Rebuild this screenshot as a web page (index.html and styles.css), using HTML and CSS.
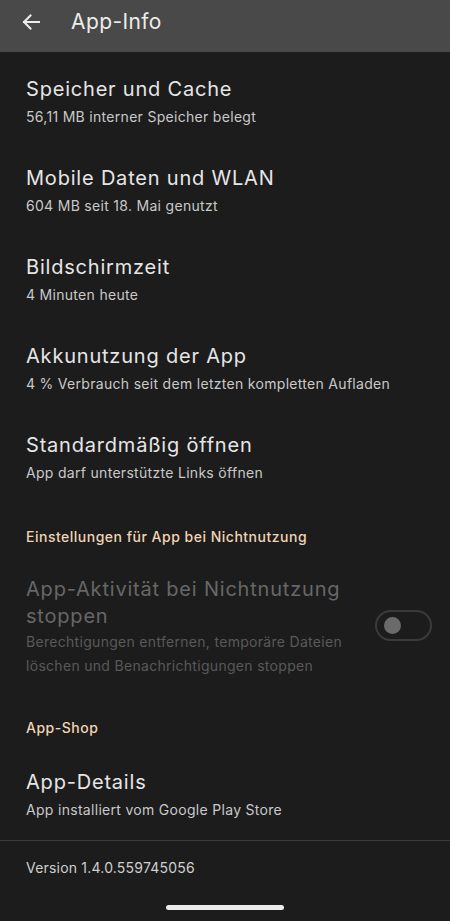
FILE: index.html
```html
<!doctype html>
<html>
  <head>
    <meta charset="utf-8">
    <title>App-Info</title>
    <link rel="stylesheet" href="styles.css">
  </head>
  <body>
    <header class="app-bar">
      <button class="back-button" aria-label="Zurück">
        <svg width="18" height="16" viewBox="0 0 18 16" fill="none" stroke="currentColor" stroke-width="2" stroke-linecap="square">
          <path d="M2 8h15M8.5 1.5 2 8l6.5 6.5"/>
        </svg>
      </button>
      <h1 class="app-bar-title">App-Info</h1>
    </header>

    <main class="settings">
      <div class="pref">
        <div class="pref-title">Speicher und Cache</div>
        <div class="pref-summary">56,11 MB interner Speicher belegt</div>
      </div>
      <div class="pref">
        <div class="pref-title">Mobile Daten und WLAN</div>
        <div class="pref-summary">604 MB seit 18. Mai genutzt</div>
      </div>
      <div class="pref">
        <div class="pref-title">Bildschirmzeit</div>
        <div class="pref-summary">4 Minuten heute</div>
      </div>
      <div class="pref">
        <div class="pref-title">Akkunutzung der App</div>
        <div class="pref-summary">4 % Verbrauch seit dem letzten kompletten Aufladen</div>
      </div>
      <div class="pref">
        <div class="pref-title">Standardmäßig öffnen</div>
        <div class="pref-summary">App darf unterstützte Links öffnen</div>
      </div>

      <h2 class="pref-category">Einstellungen für App bei Nichtnutzung</h2>

      <div class="pref pref-switch is-disabled">
        <div class="pref-text">
          <div class="pref-title">App-Aktivität bei Nichtnutzung stoppen</div>
          <div class="pref-summary">Berechtigungen entfernen, temporäre Dateien löschen und Benachrichtigungen stoppen</div>
        </div>
        <span class="switch"><span class="switch-thumb"></span></span>
      </div>

      <h2 class="pref-category">App-Shop</h2>

      <div class="pref pref-last">
        <div class="pref-title">App-Details</div>
        <div class="pref-summary">App installiert vom Google Play Store</div>
      </div>

      <div class="version">Version 1.4.0.559745056</div>
    </main>

    <div class="nav-bar"><span class="home-handle"></span></div>
  </body>
</html>
```

FILE: styles.css
```css
* {
  box-sizing: border-box;
}

html, body {
  background: #1c1c1c;
  color: #e4e4e4;
  font-family: Inter, Roboto, sans-serif;
  height: 100%;
  margin: 0;
}

body {
  display: flex;
  flex-direction: column;
}

.app-bar {
  flex: 0 0 auto;
  display: flex;
  align-items: center;
  height: 52px;
  background: #494949;
  padding: 0 0 9px 22px;
}

.back-button {
  display: flex;
  align-items: center;
  background: none;
  border: 0;
  padding: 0;
  color: #ececec;
  width: 49px;
  height: 20px;
}

.app-bar-title {
  margin: 0;
  font-size: 21px;
  font-weight: normal;
  color: #ececec;
  letter-spacing: 0.4px;
}

.settings {
  flex: 1 1 auto;
  display: flex;
  flex-direction: column;
}

.pref {
  height: 89px;
  padding: 22px 26px 0;
}

.pref-title {
  font-size: 20px;
  line-height: 30px;
  color: #e6e6e6;
  letter-spacing: 0.8px;
}

.pref-summary {
  margin-top: 2px;
  font-size: 14px;
  line-height: 22px;
  color: #c9c9c9;
  letter-spacing: 0.3px;
}

.pref-category {
  margin: 0;
  padding: 30px 26px 9px;
  font-size: 14px;
  line-height: 20px;
  font-weight: 500;
  color: #f0d4b4;
  letter-spacing: 0.5px;
}

.pref-switch {
  display: flex;
  align-items: center;
  gap: 24px;
  height: auto;
  padding: 20px 18px 10px 26px;
}

.pref-switch .pref-title {
  line-height: 27px;
}

.pref-switch .pref-summary {
  margin-top: 0;
  line-height: 24px;
}

.pref-text {
  flex: 1 1 auto;
}

.is-disabled .pref-title {
  color: #676767;
}

.is-disabled .pref-summary {
  color: #595959;
}

.switch {
  flex: 0 0 auto;
  display: flex;
  align-items: center;
  width: 57px;
  height: 31px;
  margin-top: -4px;
  border: 2px solid #3a3a3a;
  border-radius: 16px;
  padding-left: 7px;
}

.switch-thumb {
  width: 17px;
  height: 17px;
  border-radius: 50%;
  background: #6a6a6a;
}

.pref-last {
  height: auto;
  padding: 20px 26px 19px;
  border-bottom: 1px solid #3b3b3b;
}

.version {
  padding: 17px 26px 0;
  font-size: 14px;
  line-height: 20px;
  color: #cfcfcf;
  letter-spacing: 0.2px;
}

.nav-bar {
  flex: 0 0 auto;
  display: flex;
  justify-content: center;
  padding-bottom: 11px;
}

.home-handle {
  width: 118px;
  height: 5px;
  border-radius: 3px;
  background: #ececec;
}
```
